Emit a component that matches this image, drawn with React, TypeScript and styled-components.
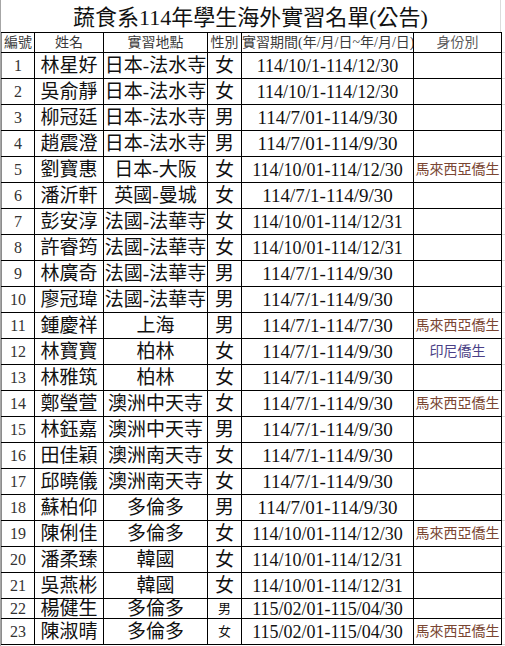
import React from 'react'
import styled, { createGlobalStyle } from 'styled-components'

const GlobalStyle = createGlobalStyle`
  html, body {
    margin: 0;
    padding: 0;
    background: #ffffff;
  }
  body {
    font-family: "Liberation Serif", "Noto Sans CJK TC", serif;
    color: #000000;
  }
`

type Row = {
  no: number
  name: string
  place: string
  sex: string
  period: string
  note?: string
  smallSex?: boolean
  short?: boolean
}

const rows: Row[] = [
  { no: 1, name: '林星好', place: '日本-法水寺', sex: '女', period: '114/10/1-114/12/30' },
  { no: 2, name: '吳俞靜', place: '日本-法水寺', sex: '女', period: '114/10/1-114/12/30' },
  { no: 3, name: '柳冠廷', place: '日本-法水寺', sex: '男', period: '114/7/01-114/9/30' },
  { no: 4, name: '趙震澄', place: '日本-法水寺', sex: '男', period: '114/7/01-114/9/30' },
  { no: 5, name: '劉寶惠', place: '日本-大阪', sex: '女', period: '114/10/01-114/12/30', note: '馬來西亞僑生' },
  { no: 6, name: '潘沂軒', place: '英國-曼城', sex: '女', period: '114/7/1-114/9/30' },
  { no: 7, name: '彭安淳', place: '法國-法華寺', sex: '女', period: '114/10/01-114/12/31' },
  { no: 8, name: '許睿筠', place: '法國-法華寺', sex: '女', period: '114/10/01-114/12/31' },
  { no: 9, name: '林廣奇', place: '法國-法華寺', sex: '男', period: '114/7/1-114/9/30' },
  { no: 10, name: '廖冠瑋', place: '法國-法華寺', sex: '男', period: '114/7/1-114/9/30' },
  { no: 11, name: '鍾慶祥', place: '上海', sex: '男', period: '114/7/1-114/7/30', note: '馬來西亞僑生' },
  { no: 12, name: '林寶寶', place: '柏林', sex: '女', period: '114/7/1-114/9/30', note: '印尼僑生' },
  { no: 13, name: '林雅筑', place: '柏林', sex: '女', period: '114/7/1-114/9/30' },
  { no: 14, name: '鄭瑩萱', place: '澳洲中天寺', sex: '女', period: '114/7/1-114/9/30', note: '馬來西亞僑生' },
  { no: 15, name: '林鈺嘉', place: '澳洲中天寺', sex: '男', period: '114/7/1-114/9/30' },
  { no: 16, name: '田佳穎', place: '澳洲南天寺', sex: '女', period: '114/7/1-114/9/30' },
  { no: 17, name: '邱曉儀', place: '澳洲南天寺', sex: '女', period: '114/7/1-114/9/30' },
  { no: 18, name: '蘇柏仰', place: '多倫多', sex: '男', period: '114/7/01-114/9/30' },
  { no: 19, name: '陳俐佳', place: '多倫多', sex: '女', period: '114/10/01-114/12/30', note: '馬來西亞僑生' },
  { no: 20, name: '潘柔臻', place: '韓國', sex: '女', period: '114/10/01-114/12/31' },
  { no: 21, name: '吳燕彬', place: '韓國', sex: '女', period: '114/10/01-114/12/31' },
  { no: 22, name: '楊健生', place: '多倫多', sex: '男', period: '115/02/01-115/04/30', smallSex: true, short: true },
  { no: 23, name: '陳淑晴', place: '多倫多', sex: '女', period: '115/02/01-115/04/30', note: '馬來西亞僑生', smallSex: true },
]

const Sheet = styled.div`
  width: 504px;
  min-height: 646px;
  border-left: 1px solid #a6a6a6;
  background: #ffffff;
`

const Title = styled.div`
  width: 500px;
  height: 32px;
  box-sizing: border-box;
  padding-top: 3px;
  border-right: 1px solid #dcdcdc;
  text-align: center;
  font-size: 22px;
  line-height: 29px;
  color: #111;
  white-space: nowrap;
`

const Table = styled.table`
  border-collapse: collapse;
  table-layout: fixed;
  width: 504px;
`

const Tr = styled.tr<{ $short?: boolean }>`
  height: ${p => (p.$short ? '19px' : '26px')};
`

const HeadTr = styled.tr`
  height: 20px;
`

const Th = styled.th<{ $light?: boolean }>`
  border: 1px solid #000;
  padding: 0;
  font-weight: normal;
  font-size: 14px;
  line-height: 1;
  color: ${p => (p.$light ? '#5c5c5c' : '#3a3a3a')};
  white-space: nowrap;
  overflow: hidden;
  text-align: center;
  &:first-child {
    border-left-color: #8c8c8c;
  }
`

const Td = styled.td<{ $size?: number; $color?: string }>`
  border: 1px solid #000;
  padding: 0;
  text-align: center;
  vertical-align: middle;
  font-size: ${p => p.$size ?? 19}px;
  line-height: 1;
  color: ${p => p.$color ?? '#111'};
  white-space: nowrap;
  overflow: hidden;
  &:first-child {
    border-left-color: #8c8c8c;
  }
`

const Filler = styled.td`
  border: none;
  border-bottom: 1px solid #d8d8d8;
  padding: 0;
`

const noteColor = (note?: string) =>
  note === '印尼僑生' ? '#4a3f86' : '#7a4632'

const isLong = (period: string) => period.length > 17

export default function App() {
  return (
    <>
      <GlobalStyle />
      <Sheet>
        <Title>蔬食系114年學生海外實習名單(公告)</Title>
        <Table>
          <colgroup>
            <col style={{ width: 33 }} />
            <col style={{ width: 69 }} />
            <col style={{ width: 104 }} />
            <col style={{ width: 34 }} />
            <col style={{ width: 172 }} />
            <col style={{ width: 88 }} />
            <col style={{ width: 4 }} />
          </colgroup>
          <thead>
            <HeadTr>
              <Th>編號</Th>
              <Th>姓名</Th>
              <Th>實習地點</Th>
              <Th>性別</Th>
              <Th>實習期間(年/月/日~年/月/日)</Th>
              <Th $light>身份別</Th>
              <Filler />
            </HeadTr>
          </thead>
          <tbody>
            {rows.map(r => (
              <Tr key={r.no} $short={r.short}>
                <Td $size={16} $color="#333">{r.no}</Td>
                <Td>{r.name}</Td>
                <Td>{r.place}</Td>
                <Td $size={r.smallSex ? 13 : 19}>{r.sex}</Td>
                <Td $size={isLong(r.period) ? 18 : 19}>{r.period}</Td>
                <Td $size={14} $color={noteColor(r.note)}>{r.note ?? ''}</Td>
                <Filler />
              </Tr>
            ))}
          </tbody>
        </Table>
      </Sheet>
    </>
  )
}
